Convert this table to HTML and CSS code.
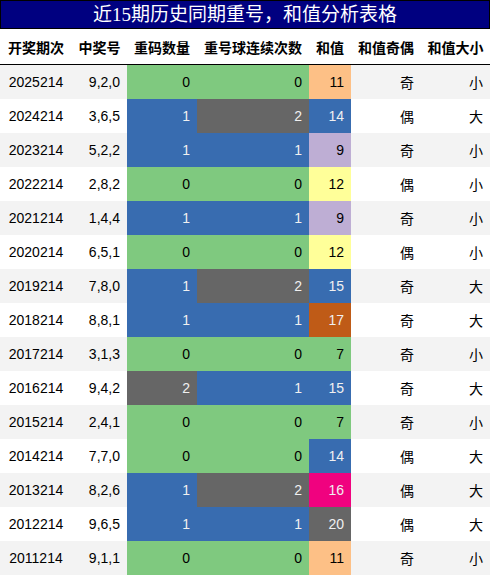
FILE: index.html
```html
<!DOCTYPE html>
<html lang="zh-CN">
<head>
  <meta charset="UTF-8">
  <title>近15期历史同期重号，和值分析表格</title>
  <link rel="stylesheet" href="styles.css">
</head>
<body>
  <div class="report">
    <div class="title">近15期历史同期重号，和值分析表格</div>
    <table class="grid">
      <colgroup>
        <col style="width: 72px">
        <col style="width: 55px">
        <col style="width: 70px">
        <col style="width: 112px">
        <col style="width: 42px">
        <col style="width: 70px">
        <col style="width: 69px">
      </colgroup>
      <thead>
        <tr>
          <th>开奖期次</th>
          <th>中奖号</th>
          <th>重码数量</th>
          <th>重号球连续次数</th>
          <th>和值</th>
          <th>和值奇偶</th>
          <th>和值大小</th>
        </tr>
      </thead>
      <tbody>
        <tr><td class="issue">2025214</td><td>9,2,0</td><td class="green">0</td><td class="green">0</td><td class="orange">11</td><td>奇</td><td>小</td></tr>
        <tr><td class="issue">2024214</td><td>3,6,5</td><td class="blue">1</td><td class="gray">2</td><td class="blue">14</td><td>偶</td><td>大</td></tr>
        <tr><td class="issue">2023214</td><td>5,2,2</td><td class="blue">1</td><td class="blue">1</td><td class="purple">9</td><td>奇</td><td>小</td></tr>
        <tr><td class="issue">2022214</td><td>2,8,2</td><td class="green">0</td><td class="green">0</td><td class="yellow">12</td><td>偶</td><td>小</td></tr>
        <tr><td class="issue">2021214</td><td>1,4,4</td><td class="blue">1</td><td class="blue">1</td><td class="purple">9</td><td>奇</td><td>小</td></tr>
        <tr><td class="issue">2020214</td><td>6,5,1</td><td class="green">0</td><td class="green">0</td><td class="yellow">12</td><td>偶</td><td>小</td></tr>
        <tr><td class="issue">2019214</td><td>7,8,0</td><td class="blue">1</td><td class="gray">2</td><td class="blue">15</td><td>奇</td><td>大</td></tr>
        <tr><td class="issue">2018214</td><td>8,8,1</td><td class="blue">1</td><td class="blue">1</td><td class="rust">17</td><td>奇</td><td>大</td></tr>
        <tr><td class="issue">2017214</td><td>3,1,3</td><td class="green">0</td><td class="green">0</td><td class="green">7</td><td>奇</td><td>小</td></tr>
        <tr><td class="issue">2016214</td><td>9,4,2</td><td class="gray">2</td><td class="blue">1</td><td class="blue">15</td><td>奇</td><td>大</td></tr>
        <tr><td class="issue">2015214</td><td>2,4,1</td><td class="green">0</td><td class="green">0</td><td class="green">7</td><td>奇</td><td>小</td></tr>
        <tr><td class="issue">2014214</td><td>7,7,0</td><td class="green">0</td><td class="green">0</td><td class="blue">14</td><td>偶</td><td>大</td></tr>
        <tr><td class="issue">2013214</td><td>8,2,6</td><td class="blue">1</td><td class="gray">2</td><td class="pink">16</td><td>偶</td><td>大</td></tr>
        <tr><td class="issue">2012214</td><td>9,6,5</td><td class="blue">1</td><td class="blue">1</td><td class="gray">20</td><td>偶</td><td>大</td></tr>
        <tr><td class="issue">2011214</td><td>9,1,1</td><td class="green">0</td><td class="green">0</td><td class="orange">11</td><td>奇</td><td>小</td></tr>
      </tbody>
    </table>
  </div>
</body>
</html>
```

FILE: styles.css
```css
body {
  margin: 0;
  background: #fff;
  font-family: "Liberation Sans", "Noto Sans CJK SC", sans-serif;
  color: #000;
}
.report {
  width: 490px;
}
.title {
  height: 27px;
  border: 1px solid #000;
  background: #000080;
  color: #fff;
  font-family: "Liberation Serif", "Noto Sans CJK SC", serif;
  font-size: 19px;
  line-height: 27px;
  text-align: center;
}
.grid {
  width: 490px;
  border-collapse: collapse;
  table-layout: fixed;
  font-size: 14px;
}
.grid th {
  height: 35px;
  padding: 0;
  font-family: "Noto Sans CJK SC", sans-serif;
  font-weight: bold;
  text-align: center;
  border-bottom: 1px solid #000;
  white-space: nowrap;
}
.grid td {
  height: 34px;
  padding: 0 7px 0 0;
  text-align: right;
  white-space: nowrap;
}
.grid td.issue {
  padding: 0;
  text-align: center;
}
.grid tbody tr:nth-child(odd) {
  background: #f3f3f3;
}
.green { background: #7fc97f; }
.purple { background: #beaed4; }
.orange { background: #fdc086; }
.yellow { background: #ffff99; }
.blue { background: #386cb0; color: #f0f0f0; }
.pink { background: #f0027f; color: #f0f0f0; }
.rust { background: #bf5b17; color: #f0f0f0; }
.gray { background: #666666; color: #f0f0f0; }
```
